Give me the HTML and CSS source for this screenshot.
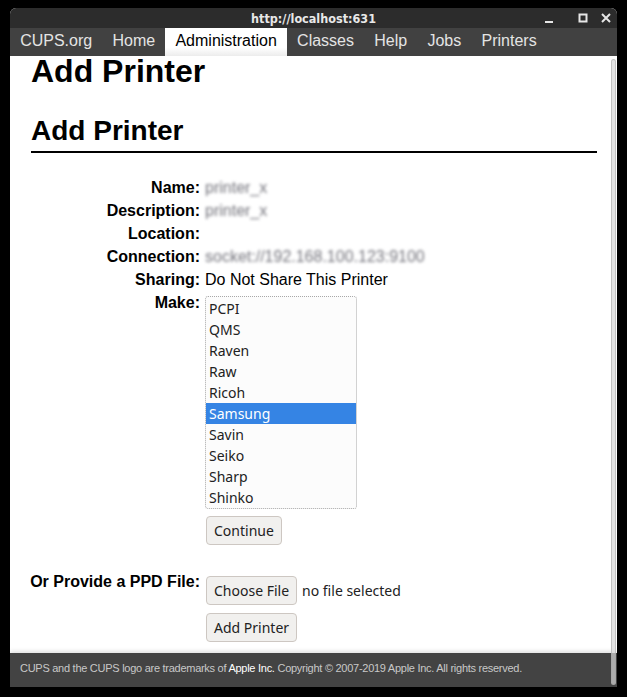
FILE: index.html
```html
<!DOCTYPE html>
<html>
<head>
<meta charset="utf-8">
<title>Add Printer - CUPS</title>
<link rel="stylesheet" href="styles.css">
</head>
<body>
<div class="window">
  <div class="titlebar">
    <span class="title">http://localhost:631</span>
    <div class="controls">
      <svg class="ctl ctl-min" width="12" height="12" viewBox="0 0 12 12"><rect x="2" y="9" width="8" height="2" fill="#e6e6e6"/></svg>
      <svg class="ctl" width="12" height="12" viewBox="0 0 12 12"><rect x="2.5" y="2.5" width="7" height="7" fill="none" stroke="#e6e6e6" stroke-width="2"/></svg>
      <svg class="ctl" width="12" height="12" viewBox="0 0 12 12"><path d="M2 2 L10 10 M10 2 L2 10" stroke="#e6e6e6" stroke-width="2"/></svg>
    </div>
  </div>
  <nav class="nav">
    <a class="nav-item">CUPS.org</a>
    <a class="nav-item">Home</a>
    <a class="nav-item active">Administration</a>
    <a class="nav-item">Classes</a>
    <a class="nav-item">Help</a>
    <a class="nav-item">Jobs</a>
    <a class="nav-item">Printers</a>
  </nav>
  <main class="content">
    <h1 class="page-title">Add Printer</h1>
    <h2 class="section-title">Add Printer</h2>
    <div class="form">
      <div class="label"><span>Name:</span></div>
      <div class="value"><span class="blur">printer_x</span></div>
      <div class="label"><span>Description:</span></div>
      <div class="value"><span class="blur">printer_x</span></div>
      <div class="label"><span>Location:</span></div>
      <div class="value"></div>
      <div class="label"><span>Connection:</span></div>
      <div class="value"><span class="blur">socket://192.168.100.123:9100</span></div>
      <div class="label"><span>Sharing:</span></div>
      <div class="value">Do Not Share This Printer</div>
      <div class="label"><span>Make:</span></div>
      <div class="value">
        <div class="listbox">
          <div class="opt">PCPI</div>
          <div class="opt">QMS</div>
          <div class="opt">Raven</div>
          <div class="opt">Raw</div>
          <div class="opt">Ricoh</div>
          <div class="opt selected">Samsung</div>
          <div class="opt">Savin</div>
          <div class="opt">Seiko</div>
          <div class="opt">Sharp</div>
          <div class="opt">Shinko</div>
        </div>
        <button class="btn btn-continue">Continue</button>
      </div>
      <div class="label ppd-label"><span>Or Provide a PPD File:</span></div>
      <div class="value ppd-value">
        <div class="file-row">
          <button class="btn">Choose File</button>
          <span class="file-status">no file selected</span>
        </div>
        <button class="btn btn-add">Add Printer</button>
      </div>
    </div>
  </main>
  <footer class="footer">CUPS and the CUPS logo are trademarks of <span class="apple">Apple Inc.</span> Copyright © 2007-2019 Apple Inc. All rights reserved.</footer>
  <div class="scrollbar"></div>
</div>
</body>
</html>
```
FILE: styles.css
```css
html, body {
  margin: 0;
  padding: 0;
  background: #000;
}
body {
  width: 627px;
  height: 697px;
  overflow: hidden;
}
.window {
  position: relative;
  margin: 8px 10px 10px 10px;
  width: 607px;
  height: 679px;
  display: flex;
  flex-direction: column;
  border-radius: 6px 6px 0 0;
  overflow: hidden;
  background: #fff;
  font-family: "Liberation Sans", Arial, sans-serif;
}
.titlebar {
  height: 20px;
  flex: none;
  background: #2c2c2c;
  display: flex;
  align-items: center;
  justify-content: center;
  position: relative;
}
.title {
  color: #e8e8e8;
  font-weight: bold;
  font-size: 12.5px;
  font-family: "DejaVu Sans Condensed", "Liberation Sans", sans-serif;
}
.controls {
  position: absolute;
  right: 5px;
  top: 4px;
  display: flex;
  gap: 11px;
}
.ctl {
  display: block;
}
.ctl-min {
  margin-right: 11px;
}
.nav {
  height: 28px;
  flex: none;
  background: #414141;
  display: flex;
  align-items: stretch;
}
.nav-item {
  padding: 0 10.15px 2px 10.15px;
  font-size: 16px;
  line-height: 25px;
  color: #e4e4e4;
}
.nav-item.active {
  color: #000;
  background: linear-gradient(#fff 0%, #fff 70%, #ececec 100%);
}
.content {
  height: 597px;
  flex: none;
  overflow: hidden;
  padding: 0 20px 0 21px;
  box-sizing: border-box;
}
.page-title {
  margin: -3px 0 0 0;
  font-size: 32px;
  line-height: 36px;
  font-weight: bold;
}
.section-title {
  margin: 26px 0 0 0;
  font-size: 28px;
  line-height: 32px;
  font-weight: bold;
  padding-bottom: 4px;
  border-bottom: 2px solid #000;
}
.form {
  margin-top: 23px;
  display: grid;
  grid-template-columns: 169px auto;
  column-gap: 5px;
  font-size: 16px;
}
.label {
  font-weight: bold;
  display: flex;
  justify-content: flex-end;
  white-space: nowrap;
  height: 23px;
  line-height: 23px;
}
.value {
  min-height: 23px;
  line-height: 23px;
}
.blur {
  color: #74747c;
  filter: blur(1.4px);
  font-size: 16px;
}
.listbox {
  margin-top: 5px;
  width: 150px;
  border: 1px dotted #a8a8a8;
  border-radius: 3px;
  background: #fcfcfc;
  padding: 1px 0 0 0;
  font-family: "Noto Sans", sans-serif;
  font-size: 14px;
  color: #222;
}
.opt {
  height: 21px;
  line-height: 21px;
  padding-left: 3px;
}
.opt.selected {
  background: #3584e4;
  color: #fff;
}
.btn {
  display: block;
  font-family: "Noto Sans", sans-serif;
  font-size: 14px;
  color: #222;
  background: #f1f0ee;
  border: 1px solid #cdc7c2;
  border-radius: 4px;
  padding: 0 7px;
  height: 29px;
  margin: 0;
}
.btn-continue {
  margin-top: 7px;
  margin-left: 1px;
}
.ppd-label {
  margin-top: 25px;
}
.ppd-value {
  margin-top: 31px;
}
.file-row {
  display: flex;
  align-items: center;
  gap: 5px;
  margin-left: 1px;
}
.file-status {
  font-family: "Noto Sans", sans-serif;
  font-size: 14px;
  color: #222;
}
.btn-add {
  margin-top: 8px;
  margin-left: 1px;
}
.footer {
  height: 34px;
  flex: none;
  background: #434343;
  color: #c8c8c8;
  font-family: "Liberation Sans", sans-serif;
  font-size: 11px;
  letter-spacing: -0.27px;
  line-height: 31px;
  padding-left: 10px;
  box-shadow: 0 -2px 4px rgba(0,0,0,0.12);
}
.apple {
  color: #fff;
}
.scrollbar {
  position: absolute;
  right: 1px;
  top: 51px;
  width: 3px;
  height: 624px;
  background: rgba(215,215,215,0.7);
  border: 1px solid rgba(160,160,160,0.5);
  border-radius: 3px;
}
```
